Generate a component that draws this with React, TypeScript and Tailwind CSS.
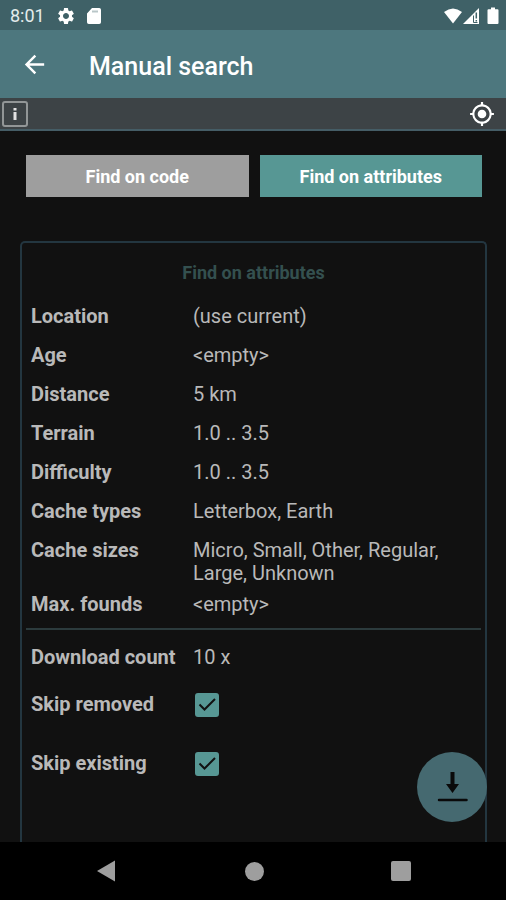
import React from 'react';
import { MdArrowBack, MdMyLocation, MdSettings } from 'react-icons/md';

const attributes = [
  { label: 'Location', value: '(use current)' },
  { label: 'Age', value: '<empty>' },
  { label: 'Distance', value: '5 km' },
  { label: 'Terrain', value: '1.0 .. 3.5' },
  { label: 'Difficulty', value: '1.0 .. 3.5' },
  { label: 'Cache types', value: 'Letterbox, Earth' },
  { label: 'Cache sizes', value: 'Micro, Small, Other, Regular, Large, Unknown' },
  { label: 'Max. founds', value: '<empty>' },
];

const StatusBar: React.FC = () => (
  <div className="flex h-[30px] items-center justify-between bg-[#3f6167] pl-2.5 pr-[7px] pt-0.5 text-white">
    <div className="flex items-center">
      <span className="w-[46px] text-lg leading-none text-[#e4ecec]">8:01</span>
      <MdSettings className="mr-2.5 h-5 w-5" />
      <svg className="h-[18px] w-4" viewBox="0 0 16 18" aria-hidden="true">
        <path
          d="M6 1h7.2A1.8 1.8 0 0 1 15 2.8V15.2A1.8 1.8 0 0 1 13.2 17H2.8A1.8 1.8 0 0 1 1 15.2V6.500z"
          fill="currentColor"
        />
        <path d="M6 3.5h6v2H6z" fill="#b9c6c8" />
      </svg>
    </div>
    <div className="flex items-center">
      <svg className="h-[18px] w-5" viewBox="0 0 20 18" aria-hidden="true">
        <path d="M1 5Q10-2 19 5L10 16.500z" fill="currentColor" />
      </svg>
      <svg className="mr-[7px] h-[18px] w-[17px]" viewBox="0 0 17 18" aria-hidden="true">
        <path d="M0 17L16 1V17z" fill="currentColor" />
        <path d="M10.500 8.500V15.500H14.500" stroke="#3f6167" strokeWidth="1" fill="none" />
        <path d="M13.300 5.500V11.500M13.300 13V14.500" stroke="#3f6167" strokeWidth="1.5" />
      </svg>
      <svg className="h-[18px] w-3" viewBox="0 0 12 18" aria-hidden="true">
        <path d="M4 0.5h4v1.8h2.5a1 1 0 0 1 1 1V16a1 1 0 0 1-1 1h-9a1 1 0 0 1-1-1V3.300a1 1 0 0 1 1-1H4z" fill="currentColor" />
      </svg>
    </div>
  </div>
);

interface SkipOptionProps {
  id: string;
  label: string;
}

const SkipOption: React.FC<SkipOptionProps> = ({ id, label }) => (
  <div className="flex h-[59px] items-center">
    <label htmlFor={id} className="w-[162px] font-bold">
      {label}
    </label>
    <span className="ml-0.5 grid h-6 w-6 place-items-center">
      <input
        id={id}
        type="checkbox"
        defaultChecked
        className="peer col-start-1 row-start-1 h-6 w-6 appearance-none rounded-[3px] border-2 border-[#579794] checked:bg-[#579794]"
      />
      <svg
        className="pointer-events-none invisible col-start-1 row-start-1 h-6 w-6 peer-checked:visible"
        viewBox="0 0 24 24"
        fill="none"
        stroke="#111111"
        strokeWidth="2"
        aria-hidden="true"
      >
        <path d="M4.500 11.500L9.500 16.500L20 6" />
      </svg>
    </span>
  </div>
);

export default function App() {
  return (
    <div className="relative flex min-h-screen flex-col bg-[#111111] font-['Roboto',sans-serif] text-[#b9b9b9]">
      <StatusBar />

      {/* App bar */}
      <header className="flex h-[68px] items-center bg-[#4d777e] pl-5 text-white">
        <button type="button" aria-label="Back" className="mr-10">
          <MdArrowBack className="h-[29px] w-[29px]" />
        </button>
        <h1 className="pt-1.5 text-[25px] font-medium leading-8">Manual search</h1>
      </header>

      {/* Info strip */}
      <div className="flex h-[33px] items-center justify-between border-b-2 border-[#455d66] bg-[#3d4346] pl-0.5 pr-[11px] text-white">
        <button
          type="button"
          aria-label="Info"
          className="grid h-[26px] w-[26px] place-items-center rounded-[3px] border-2 border-[#929697]"
        >
          <svg className="h-4 w-2" viewBox="0 0 8 16" fill="#e2e2e2" aria-hidden="true">
            <path d="M2.500 2h3v2.500h-3zM2.500 6h3v8h-3z" />
          </svg>
        </button>
        <button type="button" aria-label="Current position">
          <MdMyLocation className="h-[26px] w-[26px]" />
        </button>
      </div>

      <main className="flex flex-1 flex-col pl-5 pr-[19px] pt-6">
        <div className="flex gap-[11px] pl-1.5 pr-[5px] text-lg font-bold text-white">
          <button type="button" className="h-[42px] flex-1 bg-[#9e9e9e] pt-0.5">
            Find on code
          </button>
          <button type="button" className="h-[42px] flex-1 bg-[#579794] pt-0.5">
            Find on attributes
          </button>
        </div>

        <section className="mt-11 flex-1 rounded-t-[5px] border-2 border-b-0 border-[#233640] px-1 text-xl leading-[23px]">
          <h2 className="pb-5 pt-[18px] text-center text-lg font-bold leading-6 text-[#34504f]">
            Find on attributes
          </h2>

          <dl className="px-[5px]">
            {attributes.map((attribute) => (
              <div key={attribute.label} className="flex min-h-[39px] pb-2 last:min-h-[35px]">
                <dt className="w-[162px] shrink-0 font-bold">{attribute.label}</dt>
                <dd>{attribute.value}</dd>
              </div>
            ))}
          </dl>

          <div className="border-t-2 border-[#2c3b3d] px-[5px] pt-4">
            <div className="flex pb-1.5">
              <span className="w-[162px] font-bold">Download count</span>
              <span>10 x</span>
            </div>
            <SkipOption id="skip-removed" label="Skip removed" />
            <SkipOption id="skip-existing" label="Skip existing" />
          </div>
        </section>
      </main>

      {/* Download */}
      <button
        type="button"
        aria-label="Download"
        className="absolute bottom-[78px] right-[19px] grid h-[70px] w-[70px] place-items-center rounded-full bg-[#456970]"
      >
        <svg className="h-8 w-8" viewBox="0 0 32 32" aria-hidden="true">
          <path d="M14.500 1h4v12h4.500L16.500 22L10 13h4.500z" fill="#0a0a0a" />
          <path d="M3 29h27.500" stroke="#0a0a0a" strokeWidth="2.5" strokeLinecap="round" />
        </svg>
      </button>

      {/* System navigation */}
      <nav className="flex h-[58px] items-center justify-around bg-black px-8 text-[#9e9e9e]">
        <button type="button" aria-label="System back">
          <svg className="h-[22px] w-[22px]" viewBox="0 0 22 22" fill="currentColor" aria-hidden="true">
            <path d="M19 0.500V21.500L1 11z" />
          </svg>
        </button>
        <button type="button" aria-label="Home">
          <span className="block h-[19px] w-[19px] rounded-full bg-current" />
        </button>
        <button type="button" aria-label="Overview">
          <span className="block h-5 w-5 rounded-xs bg-current" />
        </button>
      </nav>
    </div>
  );
}
